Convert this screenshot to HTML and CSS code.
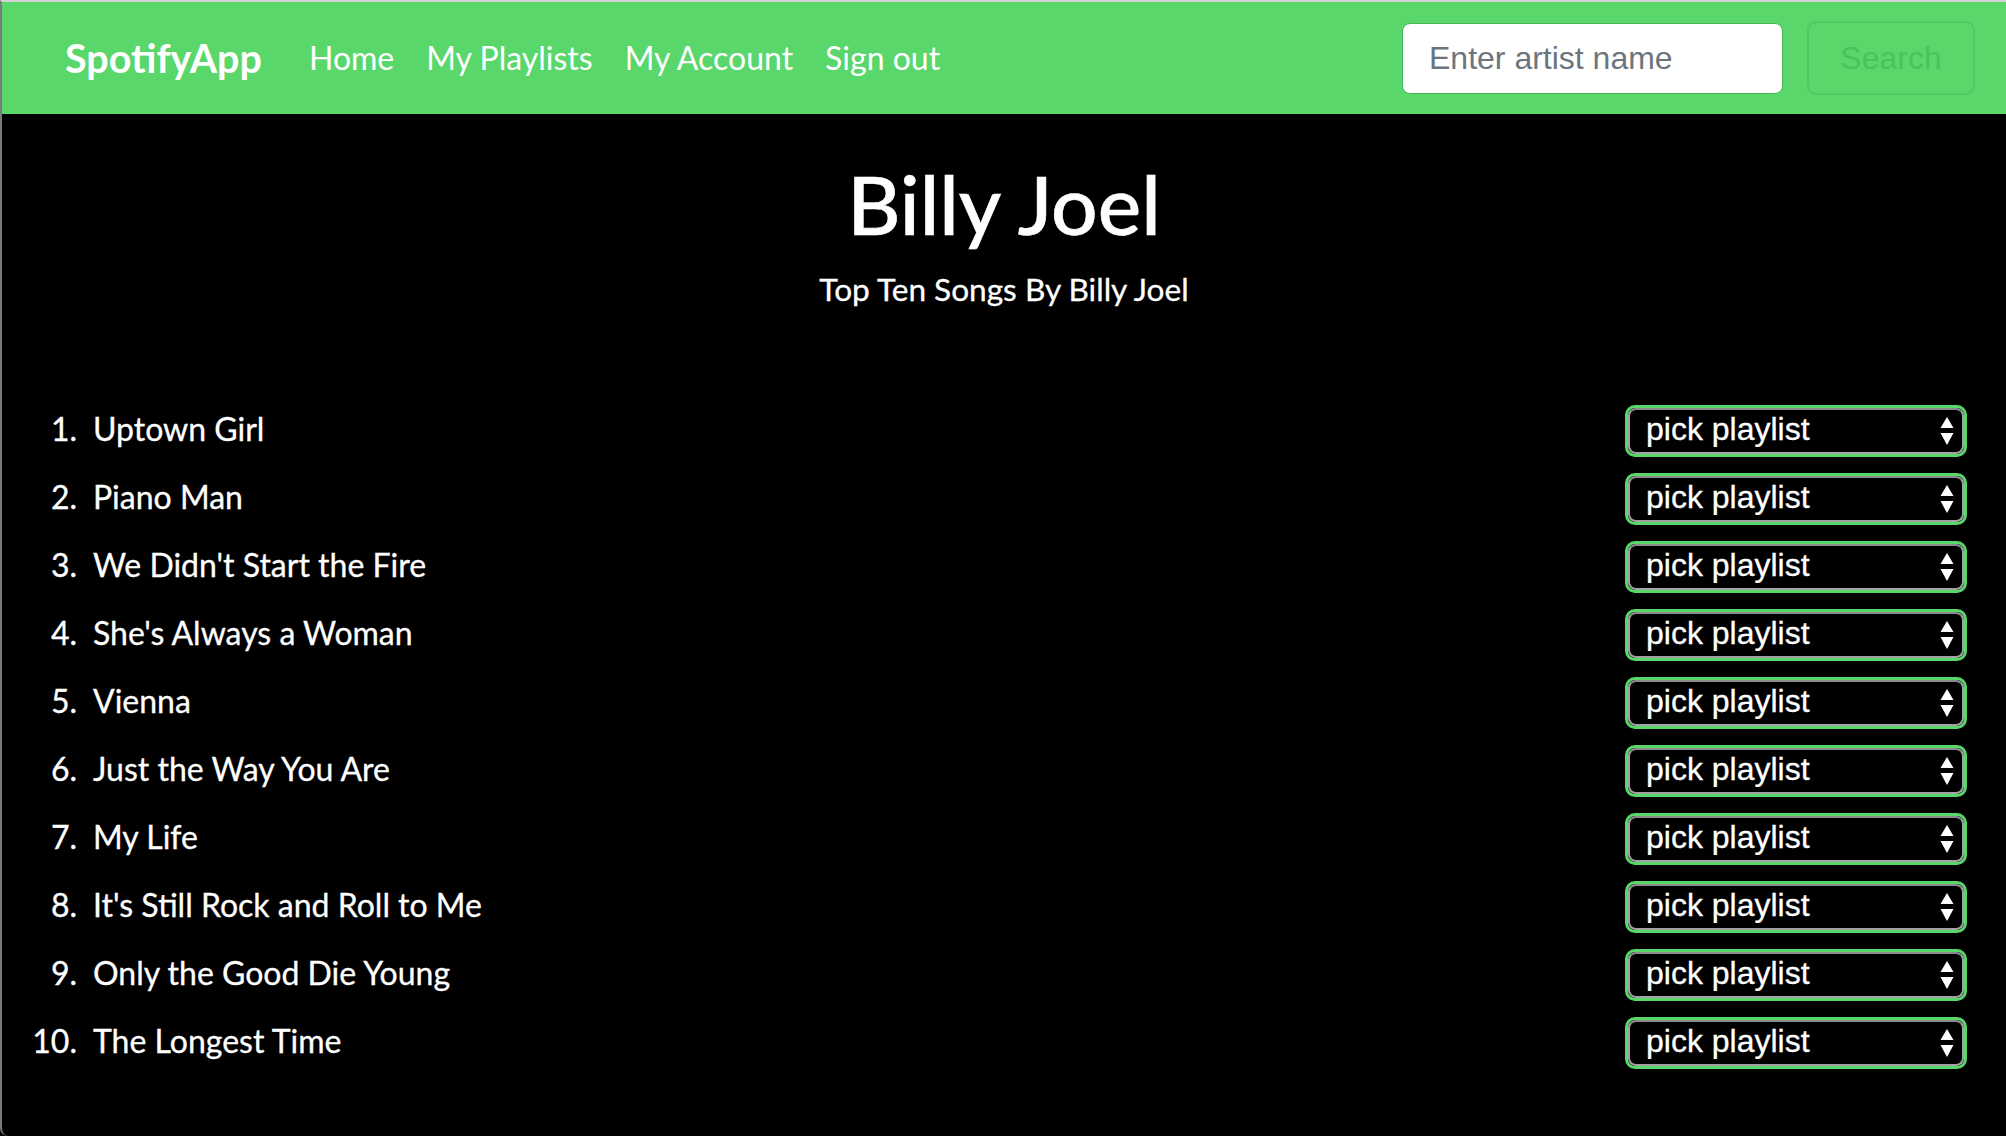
FILE: index.html
```html
<!DOCTYPE html>
<html lang="en">
<head>
<meta charset="utf-8">
<title>SpotifyApp</title>
<link rel="stylesheet" href="styles.css">
</head>
<body>
<div class="page">
  <nav class="navbar">
    <a class="brand" href="#">SpotifyApp</a>
    <ul class="nav-links">
      <li><a href="#">Home</a></li>
      <li><a href="#">My Playlists</a></li>
      <li><a href="#">My Account</a></li>
      <li><a href="#">Sign out</a></li>
    </ul>
    <form class="search">
      <input class="search-input" type="text" placeholder="Enter artist name">
      <button class="search-btn" type="button">Search</button>
    </form>
  </nav>

  <main class="content">
    <h1 class="artist">Billy Joel</h1>
    <p class="subtitle">Top Ten Songs By Billy Joel</p>

    <ol class="songs">
      <li class="song"><span class="num">1.</span><span class="title">Uptown Girl</span><div class="picker"><select><option>pick playlist</option></select><svg class="arrows" viewBox="0 0 14 28" width="14" height="28"><path d="M7 0 L13.5 11 L0.5 11 Z M0.5 16 L13.5 16 L7 28 Z" fill="#fff"/></svg></div></li>
      <li class="song"><span class="num">2.</span><span class="title">Piano Man</span><div class="picker"><select><option>pick playlist</option></select><svg class="arrows" viewBox="0 0 14 28" width="14" height="28"><path d="M7 0 L13.5 11 L0.5 11 Z M0.5 16 L13.5 16 L7 28 Z" fill="#fff"/></svg></div></li>
      <li class="song"><span class="num">3.</span><span class="title">We Didn't Start the Fire</span><div class="picker"><select><option>pick playlist</option></select><svg class="arrows" viewBox="0 0 14 28" width="14" height="28"><path d="M7 0 L13.5 11 L0.5 11 Z M0.5 16 L13.5 16 L7 28 Z" fill="#fff"/></svg></div></li>
      <li class="song"><span class="num">4.</span><span class="title">She's Always a Woman</span><div class="picker"><select><option>pick playlist</option></select><svg class="arrows" viewBox="0 0 14 28" width="14" height="28"><path d="M7 0 L13.5 11 L0.5 11 Z M0.5 16 L13.5 16 L7 28 Z" fill="#fff"/></svg></div></li>
      <li class="song"><span class="num">5.</span><span class="title">Vienna</span><div class="picker"><select><option>pick playlist</option></select><svg class="arrows" viewBox="0 0 14 28" width="14" height="28"><path d="M7 0 L13.5 11 L0.5 11 Z M0.5 16 L13.5 16 L7 28 Z" fill="#fff"/></svg></div></li>
      <li class="song"><span class="num">6.</span><span class="title">Just the Way You Are</span><div class="picker"><select><option>pick playlist</option></select><svg class="arrows" viewBox="0 0 14 28" width="14" height="28"><path d="M7 0 L13.5 11 L0.5 11 Z M0.5 16 L13.5 16 L7 28 Z" fill="#fff"/></svg></div></li>
      <li class="song"><span class="num">7.</span><span class="title">My Life</span><div class="picker"><select><option>pick playlist</option></select><svg class="arrows" viewBox="0 0 14 28" width="14" height="28"><path d="M7 0 L13.5 11 L0.5 11 Z M0.5 16 L13.5 16 L7 28 Z" fill="#fff"/></svg></div></li>
      <li class="song"><span class="num">8.</span><span class="title">It's Still Rock and Roll to Me</span><div class="picker"><select><option>pick playlist</option></select><svg class="arrows" viewBox="0 0 14 28" width="14" height="28"><path d="M7 0 L13.5 11 L0.5 11 Z M0.5 16 L13.5 16 L7 28 Z" fill="#fff"/></svg></div></li>
      <li class="song"><span class="num">9.</span><span class="title">Only the Good Die Young</span><div class="picker"><select><option>pick playlist</option></select><svg class="arrows" viewBox="0 0 14 28" width="14" height="28"><path d="M7 0 L13.5 11 L0.5 11 Z M0.5 16 L13.5 16 L7 28 Z" fill="#fff"/></svg></div></li>
      <li class="song"><span class="num">10.</span><span class="title">The Longest Time</span><div class="picker"><select><option>pick playlist</option></select><svg class="arrows" viewBox="0 0 14 28" width="14" height="28"><path d="M7 0 L13.5 11 L0.5 11 Z M0.5 16 L13.5 16 L7 28 Z" fill="#fff"/></svg></div></li>
    </ol>
  </main>
</div>
</body>
</html>
```

FILE: styles.css
```css
* { box-sizing: border-box; }

html, body {
  margin: 0;
  padding: 0;
  background: #000;
}

body {
  font-family: Lato, "Open Sans", sans-serif;
  color: #fff;
}

.page {
  min-height: 1136px;
  border-top: 2px solid #d4d4d4;
  border-left: 2px solid #7a7a7a;
  border-bottom-left-radius: 8px;
  background: #000;
}

/* ---------- navbar ---------- */
.navbar {
  height: 112px;
  background: #59d76b;
  display: flex;
  align-items: center;
  padding: 0 31px 0 63px;
}

.brand {
  font-family: Lato, sans-serif;
  font-size: 39.5px;
  font-weight: 700;
  color: #fff;
  text-decoration: none;
  margin-right: 31px;
  line-height: 1.2;
}

.nav-links {
  list-style: none;
  display: flex;
  margin: 0;
  padding: 0;
}

.nav-links a {
  display: block;
  padding: 0 16px;
  font-size: 32px;
  line-height: 1.2;
  color: #fff;
  text-decoration: none;
}

.search {
  margin: 0 0 0 auto;
  display: flex;
  align-items: center;
  gap: 24px;
}

.search-input {
  width: 381px;
  height: 71px;
  border: 1px solid #48b458;
  border-radius: 8px;
  background: #fff;
  padding: 0 26px;
  font-family: "Liberation Sans", Arial, sans-serif;
  font-size: 32px;
  color: #495057;
  outline: none;
}

.search-input::placeholder {
  color: #6c757d;
}

.search-btn {
  width: 168px;
  height: 74px;
  border: 2px solid #51c862;
  border-radius: 9px;
  background: transparent;
  font-family: "Liberation Sans", Arial, sans-serif;
  font-size: 32px;
  color: #4dc05e;
  padding: 0;
}

/* ---------- content ---------- */
.content {
  padding: 40px 0 0;
}

.artist {
  margin: 0;
  text-align: center;
  font-family: Lato, sans-serif;
  font-size: 82px;
  font-weight: 500;
  line-height: 1.2;
  -webkit-text-stroke: 0.6px #fff;
}

.subtitle {
  margin: 19px 0 0;
  text-align: center;
  font-size: 31.6px;
  line-height: 1.2;
  -webkit-text-stroke: 0.3px #fff;
}

.songs {
  list-style: none;
  margin: 96px 0 0;
  padding: 0 39px 0 27px;
  display: flex;
  flex-direction: column;
  gap: 16px;
}

.song {
  display: flex;
  align-items: center;
  height: 52px;
  font-size: 32px;
  -webkit-text-stroke: 0.3px #fff;
}

.num {
  width: 48px;
  text-align: right;
  margin-right: 16px;
  padding-bottom: 5px;
  line-height: 1.2;
}

.title {
  flex: 1;
  padding-bottom: 5px;
  line-height: 1.2;
}

.picker {
  position: relative;
  width: 342px;
  height: 52px;
  border: 3px solid #59d76b;
  border-radius: 10px;
}

.picker select {
  appearance: none;
  -webkit-appearance: none;
  display: block;
  width: 100%;
  height: 100%;
  margin: 0;
  background: #000;
  color: #fff;
  border: 2px solid #a2a2a2;
  border-top-color: #8c8c8c;
  border-radius: 8px;
  padding: 0 40px 4px 16px;
  font-family: "Liberation Sans", Arial, sans-serif;
  font-size: 32px;
  outline: none;
}

.arrows {
  position: absolute;
  right: 10px;
  top: 9px;
  pointer-events: none;
}
```
